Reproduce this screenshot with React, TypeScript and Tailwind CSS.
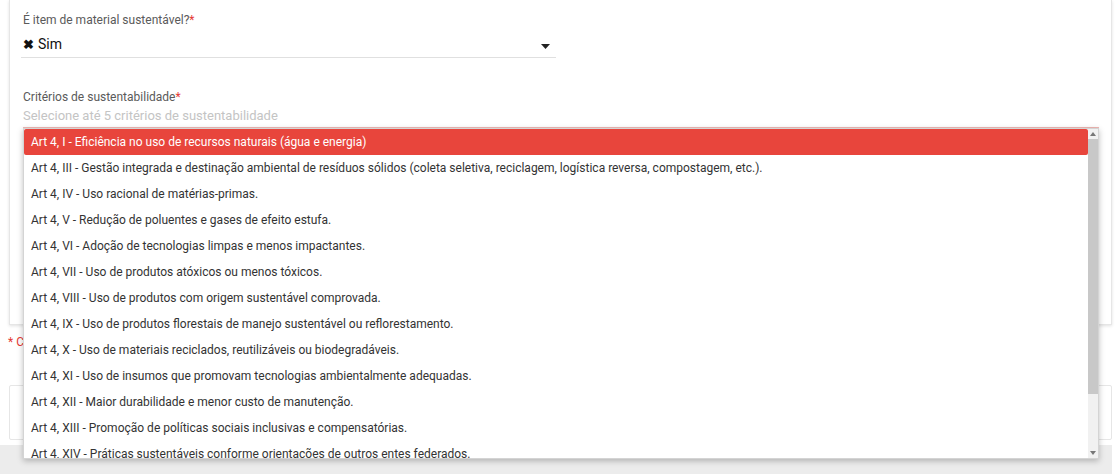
import React from "react";

const items = [
  "Art 4, I - Eficiência no uso de recursos naturais (água e energia)",
  "Art 4, III - Gestão integrada e destinação ambiental de resíduos sólidos (coleta seletiva, reciclagem, logística reversa, compostagem, etc.).",
  "Art 4, IV - Uso racional de matérias-primas.",
  "Art 4, V - Redução de poluentes e gases de efeito estufa.",
  "Art 4, VI - Adoção de tecnologias limpas e menos impactantes.",
  "Art 4, VII - Uso de produtos atóxicos ou menos tóxicos.",
  "Art 4, VIII - Uso de produtos com origem sustentável comprovada.",
  "Art 4, IX - Uso de produtos florestais de manejo sustentável ou reflorestamento.",
  "Art 4, X - Uso de materiais reciclados, reutilizáveis ou biodegradáveis.",
  "Art 4, XI - Uso de insumos que promovam tecnologias ambientalmente adequadas.",
  "Art 4, XII - Maior durabilidade e menor custo de manutenção.",
  "Art 4, XIII - Promoção de políticas sociais inclusivas e compensatórias.",
  "Art 4, XIV - Práticas sustentáveis conforme orientações de outros entes federados.",
];

export default function App() {
  return (
    <div
      className="relative w-[1119px] h-[474px] overflow-hidden bg-white"
      style={{ fontFamily: "Roboto, 'Liberation Sans', sans-serif" }}
    >
      <div className="flex flex-col h-full">
        <div className="ml-[9px] w-[1103px] h-[325px] border-l border-r border-b border-[#e6e6e6] shadow-[0_1px_3px_rgba(0,0,0,0.12)] pl-[13px] pt-[13px]">
          <div className="text-[12px] leading-[14px] text-[#5a5a5a]">
            É item de material sustentável?<span className="text-[#e53935]">*</span>
          </div>
          <div className="mt-[4px] w-[535px] -ml-[2px] pl-[2px] h-[27px] border-b border-[#e0e0e0] flex items-center justify-between pr-[6px]">
            <div className="flex items-center gap-[4px] text-[14px] text-[#111]">
              <span className="text-[13px] font-bold leading-none">✖</span>
              <span>Sim</span>
            </div>
            <svg width="9" height="5" viewBox="0 0 9 5" className="mt-[4px]">
              <path d="M0 0h9L4.5 5z" fill="#222" />
            </svg>
          </div>
          <div className="mt-[32px] text-[12px] leading-[14px] text-[#5a5a5a]">
            Critérios de sustentabilidade<span className="text-[#e53935]">*</span>
          </div>
          <div className="mt-[4px] w-[1076px] h-[20px] border-b border-[#f0b8b4] text-[13px] leading-[16px] text-[#c4c4c4]">
            Selecione até 5 critérios de sustentabilidade
          </div>
        </div>
        <div className="ml-[8px] mt-[10px] text-[12px] leading-[14px] text-[#e53935]">* Campos obrigatórios</div>
        <div className="ml-[9px] mt-[36px] w-[1103px] h-[55px] border border-[#e6e6e6] rounded-[2px]" />
        <div className="mt-[5px] w-[1112px] flex-1 bg-[#ececec]" />
      </div>

      <div className="absolute left-[23px] top-[128px] w-[1076px] h-[331px] bg-white border border-[#d4d4d4] shadow-[0_2px_6px_rgba(0,0,0,0.25)] flex">
        <div className="flex-1 overflow-hidden">
          {items.map((t, i) => (
            <div
              key={i}
              className={
                i === 0
                  ? "h-[26px] flex items-center pl-[7px] text-[12px] text-white bg-[#e8453c] rounded-[2px]"
                  : "h-[26px] flex items-center pl-[7px] text-[12px] text-[#333]"
              }
            >
              {t}
            </div>
          ))}
        </div>
        <div className="w-[10px] h-full flex flex-col bg-[#f1f1f1]">
          <div className="h-[10px] flex items-center justify-center">
            <svg width="6" height="4" viewBox="0 0 6 4">
              <path d="M0 4L3 0l3 4z" fill="#777" />
            </svg>
          </div>
          <div className="h-[255px] bg-[#c8c8c8]" />
          <div className="flex-1" />
          <div className="h-[10px] flex items-center justify-center">
            <svg width="6" height="4" viewBox="0 0 6 4">
              <path d="M0 0h6L3 4z" fill="#777" />
            </svg>
          </div>
        </div>
      </div>
    </div>
  );
}
